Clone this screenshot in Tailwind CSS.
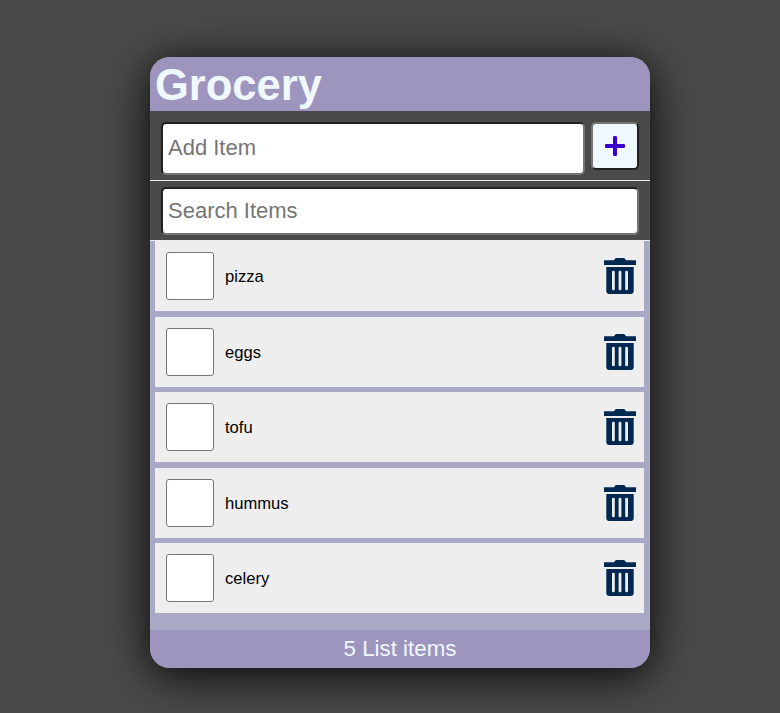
<!DOCTYPE html>
<html lang="en">
<head>
<meta charset="utf-8">
<title>Grocery</title>
<script src="https://cdn.jsdelivr.net/npm/@tailwindcss/browser@4"></script>
</head>
<body class="h-[713px] overflow-hidden bg-[#4a4a4a] pt-[57px] pl-[150px] font-['Liberation_Sans',Arial,sans-serif]">
<svg class="hidden"><symbol id="trash" viewBox="0 0 32 36"><path fill-rule="evenodd" d="M.5 2.300h9.500q1-2.300 2.500-2.300h7q1.500 0 2.500 2.300h9.500q.5 0 .5.500v3.700q0 .5-.5.500h-31q-.5 0-.5-.5v-3.700q0-.5.5-.5zM2.300 9h27.400v24q0 3-3 3h-21.400q-3 0-3-3zM8 14v17q0 1.200 1.400 1.200t1.400-1.200v-17q0-1.200-1.400-1.200t-1.400 1.200zM14.600 14v17q0 1.200 1.400 1.200t1.400-1.200v-17q0-1.200-1.400-1.200t-1.400 1.200zM21.200 14v17q0 1.200 1.400 1.200t1.400-1.200v-17q0-1.200-1.400-1.200t-1.400 1.200z"/></symbol></svg>
<main class="flex h-[611px] w-[500px] flex-col overflow-hidden rounded-[20px] bg-[#a9a9c6] shadow-[0_7px_46px_rgba(0,0,0,0.95)]">
  <header class="flex h-[54px] shrink-0 items-center bg-[#9e95bf] pt-0.5 pl-[5px]"><h1 class="text-[43.5px] leading-[54px] font-bold text-[#f0f8ff]">Grocery</h1></header>
  <form class="flex h-[70px] shrink-0 items-start gap-1.5 border-b border-[#eeeeee] bg-[#4a4a4a] px-[11px] pt-[11px]">
    <input type="text" placeholder="Add Item" class="h-[53px] w-[424px] rounded-[5px] border-2 border-t-[#202020] border-r-[#757575] border-b-[#757575] border-l-[#202020] bg-white px-[5px] pb-px text-[22px] placeholder:text-[#757575]">
    <button type="button" aria-label="Add" class="flex size-12 items-center justify-center rounded-[5px] border-2 border-t-[#757575] border-r-[#202020] border-b-[#202020] border-l-[#757575] bg-[#f0f8ff]">
      <svg class="size-5" viewBox="0 0 20 20" fill="#3a00cc"><rect x="8" width="4" height="20" rx="1.300"/><rect y="8" width="20" height="4" rx="1.300"/></svg>
    </button>
  </form>
  <div class="flex h-[60px] shrink-0 items-start border-b border-[#eeeeee] bg-[#4a4a4a] px-[11px] pt-1.5">
    <input type="text" placeholder="Search Items" class="h-12 w-full rounded-[5px] border-2 border-t-[#202020] border-r-[#757575] border-b-[#757575] border-l-[#202020] bg-white px-[5px] text-[22px] placeholder:text-[#757575]">
  </div>
  <ul class="grow pr-1.5 pl-[5px] text-[16.600px] text-black">
    <li class="mb-1.5 flex h-[70px] items-center bg-[#eeeeee] pr-2 pl-[11px]"><span class="mr-[11px] size-12 rounded-[3px] border border-[#767676] bg-white"></span><span class="grow pt-0.5">pizza</span><svg class="h-9 w-8 fill-[#002850]"><use href="#trash"/></svg></li>
    <li class="mb-[5px] flex h-[70px] items-center bg-[#eeeeee] pr-2 pl-[11px]"><span class="mr-[11px] size-12 rounded-[3px] border border-[#767676] bg-white"></span><span class="grow pt-0.5">eggs</span><svg class="h-9 w-8 fill-[#002850]"><use href="#trash"/></svg></li>
    <li class="mb-1.5 flex h-[70px] items-center bg-[#eeeeee] pr-2 pl-[11px]"><span class="mr-[11px] size-12 rounded-[3px] border border-[#767676] bg-white"></span><span class="grow pt-0.5">tofu</span><svg class="h-9 w-8 fill-[#002850]"><use href="#trash"/></svg></li>
    <li class="mb-[5px] flex h-[70px] items-center bg-[#eeeeee] pr-2 pl-[11px]"><span class="mr-[11px] size-12 rounded-[3px] border border-[#767676] bg-white"></span><span class="grow pt-0.5">hummus</span><svg class="h-9 w-8 fill-[#002850]"><use href="#trash"/></svg></li>
    <li class="flex h-[70px] items-center bg-[#eeeeee] pr-2 pl-[11px]"><span class="mr-[11px] size-12 rounded-[3px] border border-[#767676] bg-white"></span><span class="grow pt-0.5">celery</span><svg class="h-9 w-8 fill-[#002850]"><use href="#trash"/></svg></li>
  </ul>
  <footer class="flex h-[38px] shrink-0 items-center justify-center bg-[#9e95bf] text-[22.300px] text-[#f0f8ff]">5 List items</footer>
</main>
</body>
</html>
